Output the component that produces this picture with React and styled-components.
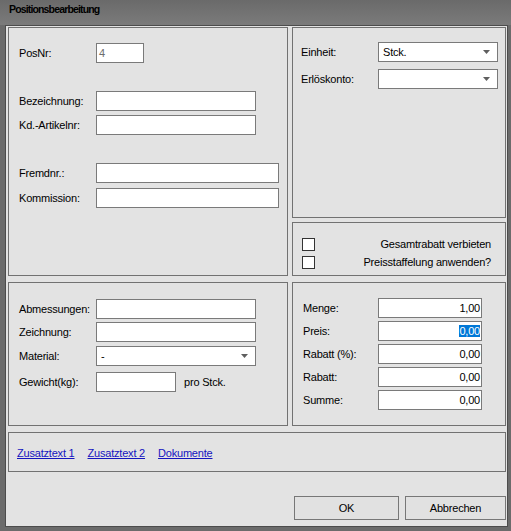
import React from 'react';
import styled, { createGlobalStyle } from 'styled-components';

const GlobalStyle = createGlobalStyle`
	html, body {
		margin: 0;
		padding: 0;
		background: #6b6b6b;
	}
	body {
		font-family: "Liberation Sans", Arial, sans-serif;
		font-size: 11px;
		letter-spacing: -0.2px;
		color: #000;
	}
`;

const Frame = styled.div`
	width: 511px;
	height: 531px;
	display: flex;
	flex-direction: column;
	background: #6b6b6b;
	box-sizing: border-box;
`;

const TitleBar = styled.div`
	height: 25px;
	flex-shrink: 0;
	box-sizing: border-box;
	padding: 3px 9px 0;
	background: linear-gradient(#6a6a6a, #7b7b7b);
	font-weight: bold;
	font-size: 10.5px;
	letter-spacing: -0.85px;
	line-height: 13px;
	color: #000;
`;

const Body = styled.div`
	flex: 1;
	display: flex;
	padding: 0 3px 4px 5px;
	min-height: 0;
`;

const Client = styled.div`
	flex: 1;
	box-sizing: border-box;
	border: 1px solid #4c4c4c;
	background: #e3e3e3;
	padding: 1px 1px 0 2px;
	display: grid;
	grid-template-columns: 280px 214px;
	grid-template-rows: 249px 144px 40px auto;
	column-gap: 4px;
	row-gap: 6px;
	align-content: start;
`;

const Panel = styled.div`
	box-sizing: border-box;
	border: 1px solid #727272;
	padding: ${p => p.$pad};
	grid-column: ${p => (p.$wide ? '1 / span 2' : 'auto')};
`;

const Stack = styled.div`
	display: flex;
	flex-direction: column;
	gap: 4px;
`;

const Row = styled.div`
	display: flex;
	align-items: center;
	height: 20px;
	margin-top: ${p => p.$gap || 0}px;
`;

const Label = styled.span`
	width: ${p => p.$w}px;
	flex-shrink: 0;
	line-height: 13px;
	white-space: nowrap;
`;

const TextBox = styled.div`
	width: ${p => p.$w}px;
	height: 20px;
	box-sizing: border-box;
	border: 1px solid #7a7a7a;
	background: #fff;
	display: flex;
	align-items: center;
	justify-content: ${p => (p.$right ? 'flex-end' : 'flex-start')};
	padding: ${p => (p.$right ? '0 1px 0 2px' : '0 2px 0 2px')};
	color: ${p => (p.$muted ? '#6d6d6d' : '#000')};
	line-height: 13px;
`;

const Selected = styled.span`
	background: #0078d7;
	color: #fff;
	line-height: 11px;
	padding-top: 1px;
`;

const Combo = styled(TextBox)`
	padding: 0 7px 0 4px;
	justify-content: space-between;
`;

const Arrow = () => (
	<svg width="7" height="4" viewBox="0 0 7 4">
		<polygon points="0,0 7,0 3.5,4" fill="#5f5f5f" />
	</svg>
);

const After = styled.span`
	margin-left: 8px;
	line-height: 13px;
`;

const CheckRow = styled.div`
	display: flex;
	align-items: center;
	height: 13px;
	margin-top: ${p => p.$gap || 0}px;
`;

const CheckBox = styled.div`
	width: 13px;
	height: 13px;
	box-sizing: border-box;
	border: 1px solid #333;
	background: #fff;
	flex-shrink: 0;
`;

const CheckLabel = styled.span`
	margin-left: auto;
	line-height: 13px;
`;

const LinkRow = styled.div`
	display: flex;
	gap: 13px;
	line-height: 13px;
`;

const LinkText = styled.a`
	color: #1414c0;
	text-decoration: underline;
	cursor: pointer;
`;

const ButtonRow = styled.div`
	grid-column: 1 / span 2;
	display: flex;
	justify-content: flex-end;
	gap: 6px;
	margin-top: 18px;
`;

const Button = styled.button`
	width: ${p => p.$w}px;
	height: 24px;
	box-sizing: border-box;
	border: 1px solid #777;
	background: #e1e1e1;
	font-family: inherit;
	font-size: 11px;
	letter-spacing: -0.2px;
	color: #000;
	padding: 0;
`;

export default function App() {
	return (
		<Frame>
			<GlobalStyle />
			<TitleBar>Positionsbearbeitung</TitleBar>
			<Body>
				<Client>
					<Panel $pad="15px 0 0 10px">
						<Row>
							<Label $w={77}>PosNr:</Label>
							<TextBox $w={48} $muted>4</TextBox>
						</Row>
						<Row $gap={28}>
							<Label $w={77}>Bezeichnung:</Label>
							<TextBox $w={160} />
						</Row>
						<Row $gap={4}>
							<Label $w={77}>Kd.-Artikelnr:</Label>
							<TextBox $w={160} />
						</Row>
						<Row $gap={28}>
							<Label $w={77}>Fremdnr.:</Label>
							<TextBox $w={183} />
						</Row>
						<Row $gap={5}>
							<Label $w={77}>Kommission:</Label>
							<TextBox $w={183} />
						</Row>
					</Panel>

					<Stack>
						<Panel $pad="14px 0 0 8px" style={{ height: 191 }}>
							<Row>
								<Label $w={77}>Einheit:</Label>
								<Combo $w={120}>
									<span>Stck.</span>
									<Arrow />
								</Combo>
							</Row>
							<Row $gap={7}>
								<Label $w={77}>Erlöskonto:</Label>
								<Combo $w={120}>
									<span />
									<Arrow />
								</Combo>
							</Row>
						</Panel>
						<Panel $pad="15px 14px 0 9px" style={{ height: 54 }}>
							<CheckRow>
								<CheckBox />
								<CheckLabel>Gesamtrabatt verbieten</CheckLabel>
							</CheckRow>
							<CheckRow $gap={5}>
								<CheckBox />
								<CheckLabel>Preisstaffelung anwenden?</CheckLabel>
							</CheckRow>
						</Panel>
					</Stack>

					<Panel $pad="16px 0 0 10px">
						<Row>
							<Label $w={77}>Abmessungen:</Label>
							<TextBox $w={160} />
						</Row>
						<Row $gap={3}>
							<Label $w={77}>Zeichnung:</Label>
							<TextBox $w={160} />
						</Row>
						<Row $gap={4}>
							<Label $w={77}>Material:</Label>
							<Combo $w={160}>
								<span>-</span>
								<Arrow />
							</Combo>
						</Row>
						<Row $gap={6}>
							<Label $w={77}>Gewicht(kg):</Label>
							<TextBox $w={80} />
							<After>pro Stck.</After>
						</Row>
					</Panel>

					<Panel $pad="15px 0 0 10px">
						<Row>
							<Label $w={75}>Menge:</Label>
							<TextBox $w={104} $right>1,00</TextBox>
						</Row>
						<Row $gap={3}>
							<Label $w={75}>Preis:</Label>
							<TextBox $w={104} $right>
								<Selected>0,00</Selected>
							</TextBox>
						</Row>
						<Row $gap={3}>
							<Label $w={75}>Rabatt (%):</Label>
							<TextBox $w={104} $right>0,00</TextBox>
						</Row>
						<Row $gap={3}>
							<Label $w={75}>Rabatt:</Label>
							<TextBox $w={104} $right>0,00</TextBox>
						</Row>
						<Row $gap={3}>
							<Label $w={75}>Summe:</Label>
							<TextBox $w={104} $right>0,00</TextBox>
						</Row>
					</Panel>

					<Panel $wide $pad="14px 0 0 8px">
						<LinkRow>
							<LinkText>Zusatztext 1</LinkText>
							<LinkText>Zusatztext 2</LinkText>
							<LinkText>Dokumente</LinkText>
						</LinkRow>
					</Panel>

					<ButtonRow>
						<Button $w={105}>OK</Button>
						<Button $w={101}>Abbrechen</Button>
					</ButtonRow>
				</Client>
			</Body>
		</Frame>
	);
}
